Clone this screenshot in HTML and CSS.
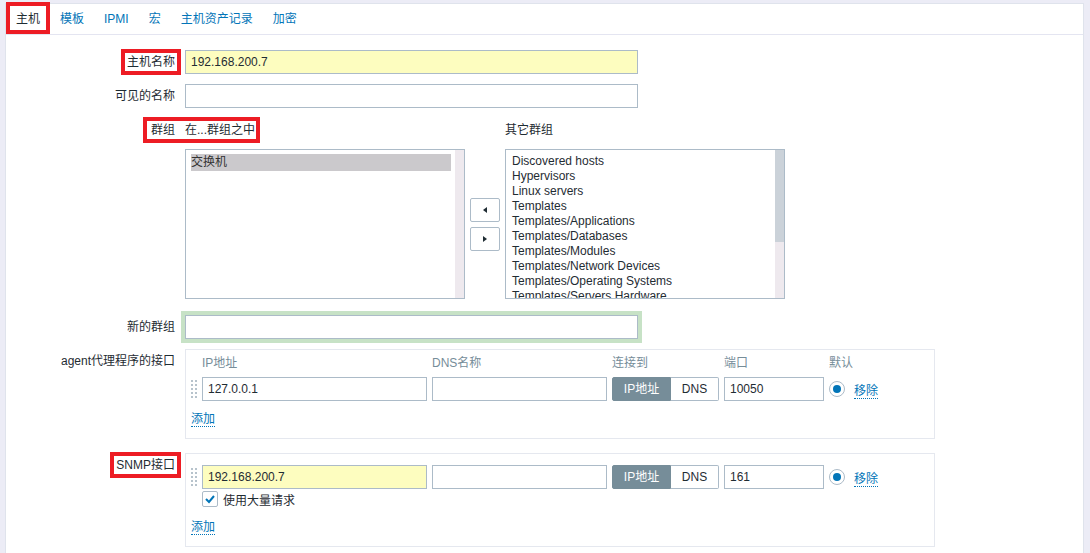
FILE: index.html
```html
<!DOCTYPE html>
<html lang="zh-CN">
<head>
  <meta charset="UTF-8">
  <title>主机</title>
  <link rel="stylesheet" href="styles.css">
</head>
<body>
  <div class="page">
    <ul class="tabs">
      <li class="tab active marked">主机</li>
      <li class="tab">模板</li>
      <li class="tab">IPMI</li>
      <li class="tab">宏</li>
      <li class="tab">主机资产记录</li>
      <li class="tab">加密</li>
    </ul>

    <div class="form">
      <div class="row">
        <div class="label"><span class="mark">主机名称</span></div>
        <div class="field"><input class="text autofill" type="text" value="192.168.200.7"></div>
      </div>

      <div class="row">
        <div class="label">可见的名称</div>
        <div class="field"><input class="text" type="text" value=""></div>
      </div>

      <div class="row row-groups">
        <div class="label">群组</div>
        <div class="field">
          <div class="groups">
            <div class="group-head">在...群组之中</div>
            <div></div>
            <div class="group-head">其它群组</div>

            <div class="listbox">
              <div class="list list-in">
                <div class="opt selected">交换机</div>
              </div>
              <div class="scroll"></div>
            </div>

            <div class="move">
              <button class="move-btn" type="button"><span class="tri tri-left"></span></button>
              <button class="move-btn" type="button"><span class="tri tri-right"></span></button>
            </div>

            <div class="listbox">
              <div class="list list-out">
                <div class="opt">Discovered hosts</div>
                <div class="opt">Hypervisors</div>
                <div class="opt">Linux servers</div>
                <div class="opt">Templates</div>
                <div class="opt">Templates/Applications</div>
                <div class="opt">Templates/Databases</div>
                <div class="opt">Templates/Modules</div>
                <div class="opt">Templates/Network Devices</div>
                <div class="opt">Templates/Operating Systems</div>
                <div class="opt">Templates/Servers Hardware</div>
              </div>
              <div class="scroll"><div class="thumb"></div></div>
            </div>
          </div>
        </div>
        <!-- annotation frame over label + header -->
        <div class="mark-box"></div>
      </div>

      <div class="row">
        <div class="label">新的群组</div>
        <div class="field"><input class="text focus" type="text" value=""></div>
      </div>

      <div class="row row-agent">
        <div class="label">agent代理程序的接口</div>
        <div class="field">
          <div class="iface">
            <div class="iface-grid">
              <span></span>
              <span class="th">IP地址</span>
              <span class="th">DNS名称</span>
              <span class="th">连接到</span>
              <span class="th">端口</span>
              <span class="th">默认</span>
              <span></span>

              <span class="drag">
                <svg width="6" height="18" viewBox="0 0 6 18">
                  <rect x="0" y="0" width="2" height="2"/><rect x="4" y="0" width="2" height="2"/>
                  <rect x="0" y="4" width="2" height="2"/><rect x="4" y="4" width="2" height="2"/>
                  <rect x="0" y="8" width="2" height="2"/><rect x="4" y="8" width="2" height="2"/>
                  <rect x="0" y="12" width="2" height="2"/><rect x="4" y="12" width="2" height="2"/>
                  <rect x="0" y="16" width="2" height="2"/><rect x="4" y="16" width="2" height="2"/>
                </svg>
              </span>
              <input class="text" type="text" value="127.0.0.1">
              <input class="text" type="text" value="">
              <div class="toggle"><span class="seg on">IP地址</span><span class="seg">DNS</span></div>
              <input class="text" type="text" value="10050">
              <span class="radio"></span>
              <span><a class="link" href="#">移除</a></span>
            </div>
            <div class="add-row"><a class="link" href="#">添加</a></div>
          </div>
        </div>
      </div>

      <div class="row row-snmp">
        <div class="label"><span class="mark">SNMP接口</span></div>
        <div class="field">
          <div class="iface iface-snmp">
            <div class="iface-grid">
              <span class="drag">
                <svg width="6" height="18" viewBox="0 0 6 18">
                  <rect x="0" y="0" width="2" height="2"/><rect x="4" y="0" width="2" height="2"/>
                  <rect x="0" y="4" width="2" height="2"/><rect x="4" y="4" width="2" height="2"/>
                  <rect x="0" y="8" width="2" height="2"/><rect x="4" y="8" width="2" height="2"/>
                  <rect x="0" y="12" width="2" height="2"/><rect x="4" y="12" width="2" height="2"/>
                  <rect x="0" y="16" width="2" height="2"/><rect x="4" y="16" width="2" height="2"/>
                </svg>
              </span>
              <input class="text autofill" type="text" value="192.168.200.7">
              <input class="text" type="text" value="">
              <div class="toggle"><span class="seg on">IP地址</span><span class="seg">DNS</span></div>
              <input class="text" type="text" value="161">
              <span class="radio"></span>
              <span><a class="link" href="#">移除</a></span>

              <div class="check-row">
                <span class="checkbox">
                  <svg width="14" height="14" viewBox="0 0 14 14"><polyline points="3,7 6,10 11,4" fill="none" stroke="#0275b8" stroke-width="2"/></svg>
                </span>
                <span>使用大量请求</span>
              </div>
            </div>
            <div class="add-row add-snmp"><a class="link" href="#">添加</a></div>
          </div>
        </div>
      </div>
    </div>
  </div>
</body>
</html>
```

FILE: styles.css
```css
html, body {
  margin: 0;
  height: 100%;
  overflow: hidden;
}
body {
  box-sizing: border-box;
  padding: 3px 6px 0 5px;
  background-color: #ececf6;
  font-family: "Liberation Sans", Arial, "Noto Sans CJK SC", sans-serif;
  font-size: 12px;
  color: #1f2c33;
}
.page {
  background-color: #fff;
  border: 1px solid #dfe3ec;
  border-bottom: none;
  min-height: 600px;
}

/* tabs */
.tabs {
  display: flex;
  list-style: none;
  margin: 0;
  padding: 0;
  height: 30px;
  border-bottom: 1px solid #e4e5f1;
}
.tab {
  position: relative;
  padding: 0 10px;
  line-height: 30px;
  color: #0275b8;
}
.tab.active {
  color: #1f2c33;
}
.tab.marked::after {
  content: "";
  position: absolute;
  left: 0;
  right: 0;
  top: -2px;
  bottom: 0;
  border: 4px solid #ed1c24;
}

/* form rows */
.form {
  padding-top: 15px;
}
.row {
  position: relative;
  display: grid;
  grid-template-columns: 169px 1fr;
  column-gap: 10px;
  margin-bottom: 10px;
}
.row > .label {
  text-align: right;
  line-height: 24px;
  white-space: nowrap;
}
.mark {
  box-shadow: 0 0 0 2px #fff, 0 0 0 6px #ed1c24;
}
.mark-box {
  position: absolute;
  left: 137px;
  top: -1px;
  width: 117px;
  height: 26px;
  box-sizing: border-box;
  border: 4px solid #ed1c24;
  pointer-events: none;
}
.row-groups {
  margin-bottom: 16px;
}
.row-agent {
  margin-bottom: 14px;
}

.text {
  display: block;
  box-sizing: border-box;
  width: 453px;
  height: 24px;
  margin: 0;
  padding: 0 5px;
  border: 1px solid #acbbc8;
  background-color: #fff;
  font: inherit;
  color: #1f2c33;
  outline: none;
}
.text.autofill {
  background-color: #fdfdbf;
}
.text.focus {
  box-shadow: 0 0 0 4px #c7e2c6;
}

/* groups */
.groups {
  display: grid;
  grid-template-columns: 280px 40px 280px;
  grid-template-rows: 24px 150px;
  row-gap: 7px;
}
.group-head {
  line-height: 24px;
}
.listbox {
  display: flex;
  box-sizing: border-box;
  height: 150px;
  border: 1px solid #acbbc8;
  overflow: hidden;
}
.list {
  flex: 1;
  padding: 4px 4px 0 5px;
  overflow: hidden;
}
.list-in .opt {
  line-height: 17px;
  color: #333;
}
.list-out {
  padding-left: 6px;
}
.list-out .opt {
  line-height: 15px;
  white-space: nowrap;
}
.opt.selected {
  background-color: #cbc9cc;
}
.scroll {
  width: 9px;
  background-color: #eee9ee;
}
.thumb {
  height: 92px;
  background-color: #cbd2d9;
}
.move {
  display: flex;
  flex-direction: column;
  align-items: center;
  justify-content: center;
  gap: 5px;
}
.move-btn {
  display: flex;
  align-items: center;
  justify-content: center;
  width: 30px;
  height: 24px;
  padding: 0;
  border: 1px solid #acbbc8;
  border-radius: 2px;
  background-color: #fff;
}
.tri {
  width: 0;
  height: 0;
  border-top: 3px solid transparent;
  border-bottom: 3px solid transparent;
}
.tri-left {
  border-right: 4px solid #1f2c33;
}
.tri-right {
  border-left: 4px solid #1f2c33;
}

/* interfaces */
.iface {
  box-sizing: border-box;
  width: 750px;
  border: 1px solid #e5e8ef;
  padding: 5px 0 11px 0;
}
.iface-snmp {
  padding-top: 11px;
}
.iface-grid {
  display: grid;
  grid-template-columns: 11px 225px 175px 107px 100px 20px auto;
  column-gap: 5px;
  row-gap: 6px;
  align-items: center;
}
.iface-snmp .iface-grid {
  row-gap: 2px;
}
.iface-grid .text {
  width: 100%;
}
.th {
  color: #768d99;
  line-height: 16px;
  white-space: nowrap;
}
.drag {
  justify-self: end;
  display: flex;
}
.drag svg {
  fill: #b7c3cc;
}
.toggle {
  display: flex;
  height: 24px;
}
.seg {
  box-sizing: border-box;
  width: 48px;
  height: 24px;
  line-height: 22px;
  text-align: center;
  border: 1px solid #acbbc8;
  border-left: none;
  border-radius: 0 2px 2px 0;
}
.seg.on {
  width: 59px;
  background-color: #768d99;
  border: 1px solid #768d99;
  border-radius: 2px 0 0 2px;
  color: #fff;
}
.radio {
  display: flex;
  align-items: center;
  justify-content: center;
  box-sizing: border-box;
  width: 16px;
  height: 16px;
  border: 1px solid #acbbc8;
  border-radius: 50%;
}
.radio::after {
  content: "";
  width: 8px;
  height: 8px;
  border-radius: 50%;
  background-color: #0275b8;
}
.link {
  color: #0275b8;
  text-decoration: none;
  border-bottom: 1px dotted #0275b8;
}
.add-row {
  height: 16px;
  line-height: 16px;
  margin-top: 10px;
  padding-left: 5px;
}
.add-snmp {
  margin-top: 12px;
}
.check-row {
  grid-column: 2 / -1;
  display: flex;
  align-items: center;
  gap: 5px;
  height: 16px;
}
.checkbox {
  display: flex;
  align-items: center;
  justify-content: center;
  box-sizing: border-box;
  width: 16px;
  height: 16px;
  border: 1px solid #acbbc8;
  border-radius: 2px;
}
```
